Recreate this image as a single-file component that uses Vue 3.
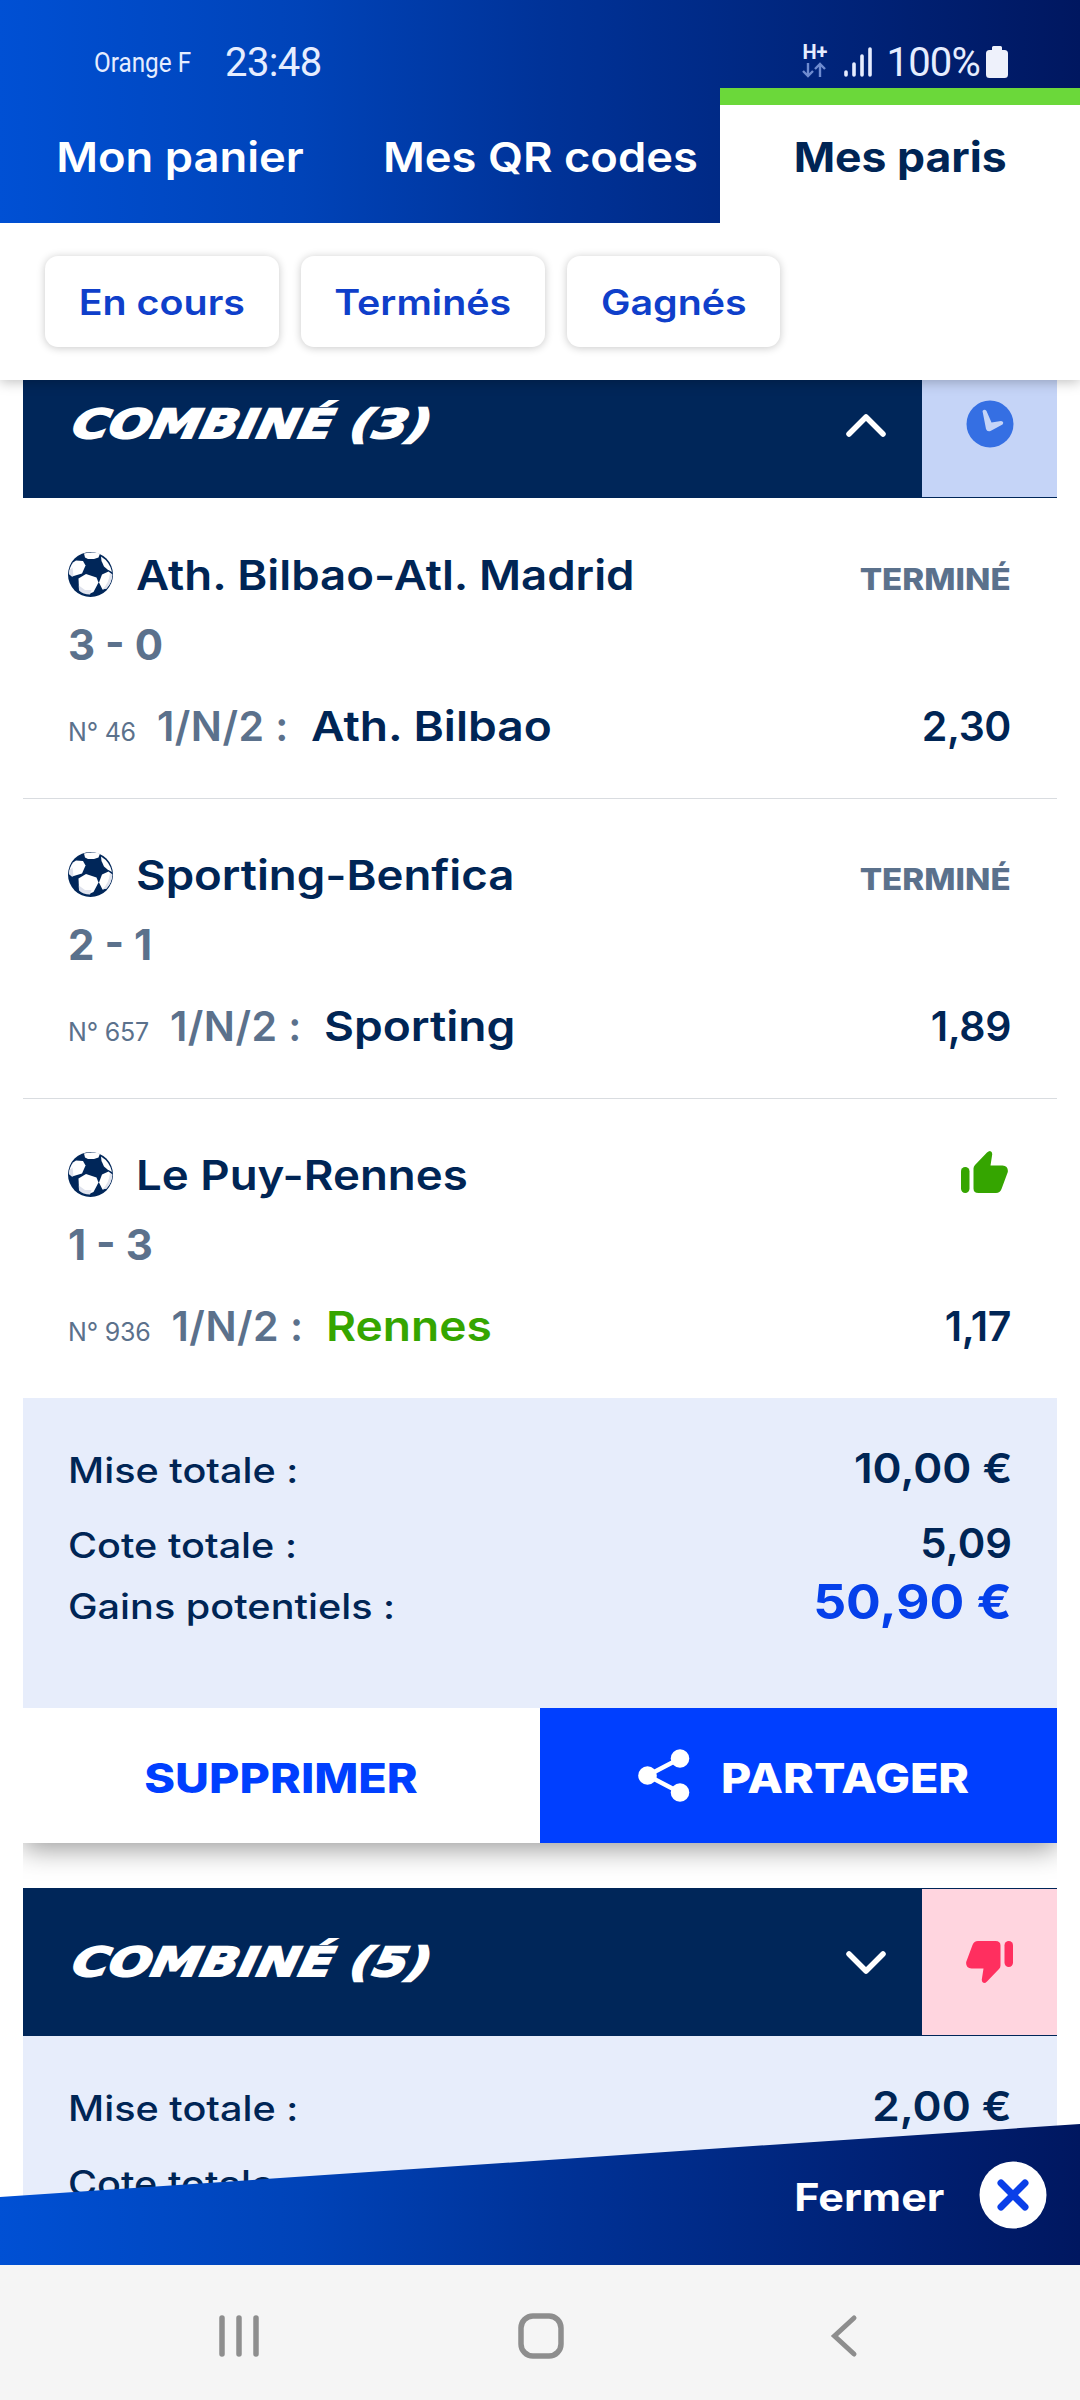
<script setup>
import { ref } from "vue";

const tabs = ["Mon panier", "Mes QR codes", "Mes paris"];
const activeTab = ref("Mes paris");

const filters = [
  { label: "En cours", width: 234 },
  { label: "Terminés", width: 244 },
  { label: "Gagnés", width: 213 },
];

const bets = ref([
  {
    id: 1,
    title: "COMBINÉ (3)",
    status: "pending",
    open: true,
    events: [
      { number: 46, name: "Ath. Bilbao-Atl. Madrid", score: "3 - 0", pick: "Ath. Bilbao", odds: "2,30", won: false },
      { number: 657, name: "Sporting-Benfica", score: "2 - 1", pick: "Sporting", odds: "1,89", won: false },
      { number: 936, name: "Le Puy-Rennes", score: "1 - 3", pick: "Rennes", odds: "1,17", won: true },
    ],
    stake: "10,00 €",
    totalOdds: "5,09",
    gains: "50,90 €",
  },
  {
    id: 2,
    title: "COMBINÉ (5)",
    status: "lost",
    open: false,
    events: [],
    stake: "2,00 €",
    totalOdds: "\u00a0",
    gains: "",
  },
]);

function toggle(bet) {
  bet.open = !bet.open;
}
</script>

<template>
  <div class="phone">
    <header class="top">
      <div class="status-bar">
        <span class="carrier">Orange F</span>
        <span class="clock">23:48</span>
        <div class="status-icons">
          <div class="network">
            <span>H+</span>
            <svg width="24" height="16" viewBox="0 0 24 16">
              <path d="M6 1v13M1 9l5 5 5-5M18 15V2M13 7l5-5 5 5" fill="none" stroke="#6f8cd0" stroke-width="2.4" />
            </svg>
          </div>
          <svg class="signal" width="28" height="30" viewBox="0 0 28 30">
            <path d="M2 25v3M10 17v11M18 9v19M26 2v26" fill="none" stroke="#e6edff" stroke-width="3.6" stroke-linecap="round" />
          </svg>
          <span class="percent">100%</span>
          <svg width="22" height="32" viewBox="0 0 22 32">
            <path d="M6 1.5Q6 0 7.5 0h7Q16 0 16 1.5V4h2.5Q22 4 22 7.5V28.5Q22 32 18.5 32h-15Q0 32 0 28.5V7.5Q0 4 3.5 4H6z" fill="#eef1fb" />
          </svg>
        </div>
      </div>
      <nav class="tabs">
        <div
          v-for="tab in tabs"
          :key="tab"
          class="tab"
          :class="{ active: tab === activeTab }"
          @click="activeTab = tab"
        >
          <span>{{ tab }}</span>
        </div>
      </nav>
    </header>

    <div class="filters">
      <div v-for="filter in filters" :key="filter.label" class="chip" :style="{ width: filter.width + 'px' }">
        <span>{{ filter.label }}</span>
      </div>
    </div>

    <main class="content">
      <div class="bets">
        <section v-for="bet in bets" :key="bet.id" class="bet">
          <div class="bet-header" @click="toggle(bet)">
            <h2>{{ bet.title }}</h2>
            <svg class="chevron" :class="{ open: bet.open }" width="40" height="24" viewBox="0 0 40 24">
              <path d="M3 3l17 17L37 3" fill="none" stroke="#fff" stroke-width="5.5" stroke-linecap="round" stroke-linejoin="round" />
            </svg>
            <div class="bet-status" :class="bet.status">
              <svg v-if="bet.status === 'pending'" width="48" height="48" viewBox="0 0 48 48">
                <circle cx="24" cy="24" r="23.5" fill="#356fe3" />
                <path d="M16.5 11Q18.5 8.5 20.5 11L25.5 22.5 35 21Q38.5 21.5 36.5 24.5L24.5 31Q21 32 20 29z" fill="#c5d4f7" />
              </svg>
              <svg v-else width="47" height="42" viewBox="0 0 47 42">
                <g transform="rotate(180 23.5 21)" fill="#ff2f5f">
                  <rect x="0" y="16" width="8.5" height="26" rx="4.2" />
                  <path d="M12.5 17.5Q12.5 15.5 14 14L26 1.5Q27.5 0 29 0Q31.5 .5 31.2 3.5L29.5 14.5H41.5Q47.5 15 46.8 21L40.5 38Q39 42 35 42H17.5Q12.5 42 12.5 37.5z" />
                </g>
              </svg>
            </div>
          </div>

          <template v-if="bet.open">
            <article v-for="event in bet.events" :key="event.number" class="event">
              <div class="event-title">
                <svg class="ball" width="45" height="45" viewBox="0 0 45 45">
                  <circle cx="22.5" cy="22.5" r="22.5" fill="#002659" />
                  <g fill="#fff">
                    <path d="M16 1.5Q24 -.5 32 1.5L30.5 5.5 26 7 20 7 17 5.5z" />
                    <path d="M5 10.5L8 8.5 15 9 17.5 13.5 14 21.5 4 24.5 1 22Q1.500 15 5 10.5z" />
                    <path d="M33 4.5Q42 10 44 20L39.5 17.5 36 14.5 33.5 9z" />
                    <path d="M10.5 26.5L18 22 28.5 25.5 30.5 30.5 25.5 40 22 41.5 11 37z" />
                    <path d="M34 22.500L40.5 19.5 44.3 22.5Q44 30.500 38.5 36.5L34.5 37.5 31 30.5z" />
                  </g>
                  <g fill="#dfe2ec">
                    <path d="M1.500 18L4.500 15.5 5.500 24 4 24.5 1 22z" />
                    <path d="M10.8 33.500L17 38 23.500 38 22 42.5Q15 42.500 11 38.500z" />
                    <path d="M44.300 22.500Q44 30.500 38.500 36.500L34.500 37.500Q41 31 42 21z" />
                  </g>
                </svg>
                <span class="name">{{ event.name }}</span>
                <svg v-if="event.won" class="won-icon" width="47" height="42" viewBox="0 0 47 42">
                  <g fill="#35a500">
                    <rect x="0" y="16" width="8.5" height="26" rx="4.2" />
                    <path d="M12.5 17.5Q12.5 15.5 14 14L26 1.5Q27.5 0 29 0Q31.5 .5 31.2 3.5L29.5 14.5H41.5Q47.5 15 46.8 21L40.5 38Q39 42 35 42H17.5Q12.5 42 12.5 37.5z" />
                  </g>
                </svg>
                <span v-else class="finished">TERMINÉ</span>
              </div>
              <div class="score">{{ event.score }}</div>
              <div class="pick-line">
                <span class="number">N° {{ event.number }}</span>
                <span class="market">1/N/2 :</span>
                <span class="pick" :class="{ won: event.won }">{{ event.pick }}</span>
                <span class="odds">{{ event.odds }}</span>
              </div>
            </article>
          </template>

          <div class="summary">
            <div class="summary-row stake">
              <span>Mise totale :</span>
              <b>{{ bet.stake }}</b>
            </div>
            <div class="summary-row total">
              <span>Cote totale :</span>
              <b>{{ bet.totalOdds }}</b>
            </div>
            <div v-if="bet.open" class="summary-row gains">
              <span>Gains potentiels :</span>
              <b>{{ bet.gains }}</b>
            </div>
          </div>

          <div v-if="bet.open" class="actions">
            <button class="delete"><span>SUPPRIMER</span></button>
            <button class="share">
              <svg width="52" height="54" viewBox="0 0 52 54">
                <path d="M42 9.5L9.5 26.5 42 43.5" fill="none" stroke="#fff" stroke-width="4.5" />
                <circle cx="42" cy="9.5" r="9.3" fill="#fff" />
                <circle cx="9.5" cy="26.5" r="9.3" fill="#fff" />
                <circle cx="42" cy="43.5" r="9.3" fill="#fff" />
              </svg>
              <span>PARTAGER</span>
            </button>
          </div>
        </section>
      </div>

      <footer class="close-bar">
        <span>Fermer</span>
        <svg width="68" height="68" viewBox="0 0 68 68">
          <circle cx="34" cy="34" r="33.5" fill="#fff" />
          <path d="M22 22l24 24M46 22L22 46" fill="none" stroke="#0a3fe8" stroke-width="7" stroke-linecap="round" />
        </svg>
      </footer>
    </main>

    <div class="nav-bar">
      <svg width="42" height="44" viewBox="0 0 42 44">
        <path d="M4 4v36M21 4v36M38 4v36" fill="none" stroke="#8e8e8e" stroke-width="5.5" stroke-linecap="round" />
      </svg>
      <svg class="home" width="48" height="48" viewBox="0 0 48 48">
        <rect x="4" y="4" width="40" height="40" rx="12" fill="none" stroke="#8e8e8e" stroke-width="5.5" />
      </svg>
      <svg width="28" height="44" viewBox="0 0 28 44">
        <path d="M24 4L4.5 22 24 40" fill="none" stroke="#8e8e8e" stroke-width="5" stroke-linecap="round" />
      </svg>
    </div>
  </div>
</template>

<style>
body {
  margin: 0;
  background: #fff;
}
</style>

<style scoped>
.phone {
  display: flex;
  flex-direction: column;
  width: 1080px;
  height: 2400px;
  overflow: hidden;
  color: #002555;
  background: #fff;
  font-family: Inter, "Open Sans", sans-serif;
}

.phone * {
  box-sizing: border-box;
}

svg {
  display: block;
  flex: none;
}

.top {
  height: 223px;
  flex: none;
  background: linear-gradient(90deg, #0050d4 0%, #0043b8 28%, #003399 50%, #001760 100%);
}

.status-bar {
  display: flex;
  align-items: center;
  height: 88px;
  padding: 35px 72px 0 94px;
  font-family: Roboto, sans-serif;
  color: #e6edff;
}

.carrier {
  width: 131px;
  padding-top: 2px;
  font-size: 27px;
  white-space: nowrap;
  transform: scaleX(0.9);
  transform-origin: left;
}

.clock {
  padding-top: 1px;
  font-size: 40px;
  letter-spacing: -0.6px;
}

.status-icons {
  display: flex;
  align-items: center;
  margin-left: auto;
}

.network {
  display: flex;
  flex-direction: column;
  gap: 3px;
  margin-right: 17px;
  font-size: 20px;
  font-weight: 700;
  line-height: 14px;
}

.signal {
  margin-right: 14px;
}

.percent {
  margin-right: 6px;
  padding-top: 1px;
  font-size: 40px;
  letter-spacing: -0.8px;
}

.tabs {
  display: flex;
  height: 135px;
}

.tab {
  width: 360px;
  padding-top: 17px;
  color: #fff;
  font-size: 41px;
  font-weight: 600;
  line-height: 104px;
  text-align: center;
  white-space: nowrap;
}

.tab span {
  display: inline-block;
  transform: scaleX(1.105);
}

.tab.active {
  padding-top: 0;
  border-top: 17px solid #6bd83a;
  background: #fff;
  color: #002555;
  font-weight: 700;
}

.tab.active span {
  transform: scaleX(1.085);
}

.filters {
  position: relative;
  z-index: 1;
  display: flex;
  gap: 22px;
  height: 157px;
  flex: none;
  padding: 33px 45px 0;
  background: #fff;
  box-shadow: 0 2px 12px rgba(0, 0, 0, 0.25);
  clip-path: inset(0 0 -20px 0);
}

.chip {
  height: 91px;
  border-radius: 13px;
  box-shadow: 0 1px 8px rgba(0, 0, 0, 0.22);
  color: #0f3fca;
  font-size: 35px;
  font-weight: 600;
  line-height: 92px;
  text-align: center;
}

.chip span {
  display: inline-block;
  transform: scaleX(1.125);
}

.content {
  position: relative;
  height: 1885px;
  flex: none;
  overflow: hidden;
}

.bets {
  padding: 0 23px;
  margin-top: -30px;
}

.bet {
  overflow: hidden;
  padding-bottom: 45px;
}

.bet-header {
  display: flex;
  align-items: center;
  height: 148px;
  padding: 1px 0 1px 44px;
  background: #002659;
}

.bet-header h2 {
  margin: 0;
  color: #fff;
  font-family: "DejaVu Sans", sans-serif;
  font-size: 40px;
  font-weight: 700;
  font-style: italic;
  line-height: 60px;
  white-space: nowrap;
  -webkit-text-stroke: 2px #fff;
  transform: skewX(-12deg) scaleX(1.245);
  transform-origin: left bottom;
}

.chevron {
  margin: 1px 36px 0 auto;
}

.chevron.open {
  transform: rotate(180deg);
}

.bet-status {
  display: flex;
  align-items: center;
  justify-content: center;
  width: 135px;
  height: 146px;
}

.bet-status.pending {
  background: #c5d4f7;
}

.bet-status.lost {
  background: #ffd5df;
}

.event {
  height: 300px;
  padding: 47px 46px 0 45px;
}

.event + .event {
  padding-top: 46px;
  border-top: 1px solid #d9dce0;
}

.event-title {
  display: flex;
  align-items: baseline;
  height: 60px;
  font-size: 41px;
  font-weight: 600;
  line-height: 60px;
}

.name {
  transform: scaleX(1.112);
  transform-origin: left;
}

.ball {
  align-self: center;
  margin: -2px 23px 0 0;
}

.won-icon {
  align-self: center;
  margin: -7px 3px 0 auto;
}

.finished {
  margin-left: auto;
  color: #5b718c;
  font-size: 30px;
  font-weight: 800;
  line-height: 1;
  transform: scaleX(1.105);
  transform-origin: right;
}

.score {
  margin-top: 10px;
  color: #5b718c;
  font-size: 42px;
  font-weight: 700;
  line-height: 60px;
}

.pick-line {
  display: flex;
  align-items: baseline;
  height: 60px;
  margin-top: 21px;
  font-size: 41px;
  font-weight: 600;
  line-height: 60px;
}

.number {
  color: #5b718c;
  font-size: 25px;
  font-weight: 400;
  line-height: 1;
  letter-spacing: -0.2px;
}

.market {
  margin: 0 22px 0 21px;
  color: #5b718c;
  letter-spacing: 0.5px;
}

.pick {
  transform: scaleX(1.125);
  transform-origin: left;
}

.pick.won {
  color: #35a500;
}

.odds {
  margin-left: auto;
  letter-spacing: -0.4px;
}

.summary {
  height: 310px;
  padding: 40px 45px 0;
  background: #e7edfb;
}

.summary-row {
  display: flex;
  align-items: baseline;
  justify-content: space-between;
  height: 60px;
  line-height: 60px;
}

.summary-row span {
  font-size: 35px;
  font-weight: 500;
  line-height: 1;
  transform: scaleX(1.132);
  transform-origin: left;
}

.summary-row b {
  font-size: 41px;
  font-weight: 600;
  transform: scaleX(1.075);
  transform-origin: right;
}

.summary-row.total {
  height: 58px;
  margin-top: 16px;
  line-height: 58px;
}

.summary-row.total b {
  transform: scaleX(1.02);
}

.summary-row.gains b {
  color: #0540ea;
  font-size: 48px;
  font-weight: 700;
}

.actions {
  display: flex;
  height: 135px;
  box-shadow: 0 6px 26px rgba(0, 0, 0, 0.4);
  clip-path: inset(0 0 -45px 0);
}

.actions button {
  display: flex;
  align-items: center;
  justify-content: center;
  width: 517px;
  border: none;
  font-family: inherit;
  font-size: 41px;
  font-weight: 800;
  line-height: 60px;
}

.delete {
  background: #fff;
  color: #003fff;
}

.share {
  gap: 31px;
  background: #003fff;
  color: #fff;
}

.actions span {
  padding-top: 5px;
  transform: scaleX(1.14);
}

.share span {
  margin-right: 20px;
  transform: scaleX(1.135);
  transform-origin: left;
}

.close-bar {
  position: absolute;
  right: 0;
  bottom: 0;
  left: 0;
  display: flex;
  align-items: center;
  justify-content: flex-end;
  gap: 35px;
  height: 141px;
  padding-right: 33px;
  background: linear-gradient(90deg, #0050d4 0%, #0043b8 28%, #003399 50%, #001760 100%);
  clip-path: polygon(0 73px, 100% 0, 100% 100%, 0 100%);
  color: #fff;
  font-size: 38px;
  font-weight: 700;
  line-height: 60px;
}

.close-bar span {
  padding-top: 5px;
  transform: scaleX(1.135);
  transform-origin: right;
}

.nav-bar {
  display: flex;
  align-items: center;
  justify-content: space-between;
  height: 135px;
  flex: none;
  padding: 7px 222px 0 218px;
  background: #f5f5f5;
}

.home {
  margin-right: 9px;
}
</style>
